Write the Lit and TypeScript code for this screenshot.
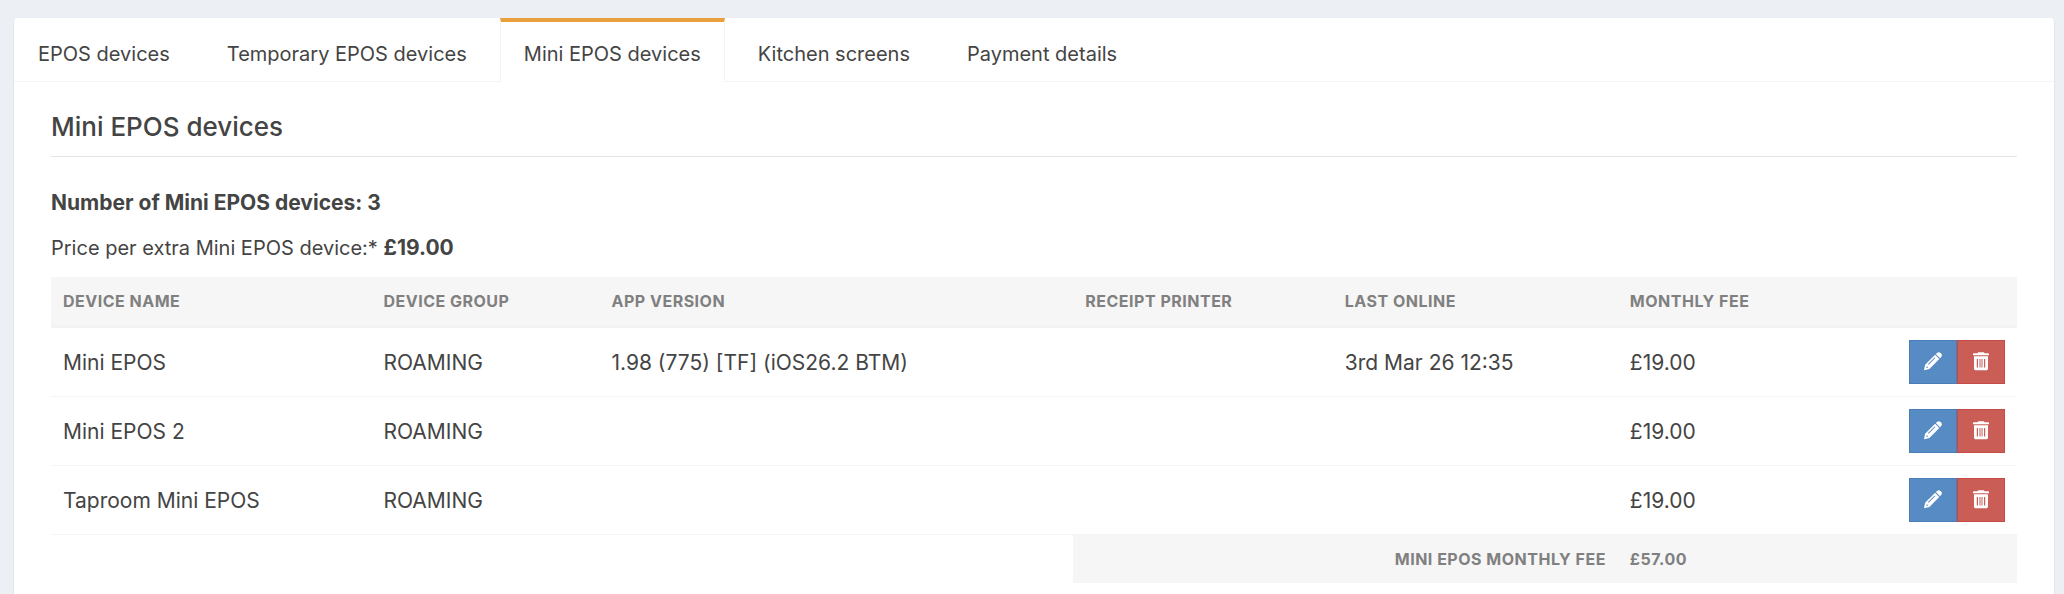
import { LitElement, html, css, svg } from "lit";
import { customElement, state } from "lit/decorators.js";

interface Device {
  name: string;
  group: string;
  version: string;
  printer: string;
  online: string;
  fee: string;
}

const TABS = [
  "EPOS devices",
  "Temporary EPOS devices",
  "Mini EPOS devices",
  "Kitchen screens",
  "Payment details",
];

const DEVICES: Device[] = [
  { name: "Mini EPOS", group: "ROAMING", version: "1.98 (775) [TF] (iOS26.2 BTM)", printer: "", online: "3rd Mar 26 12:35", fee: "£19.00" },
  { name: "Mini EPOS 2", group: "ROAMING", version: "", printer: "", online: "", fee: "£19.00" },
  { name: "Taproom Mini EPOS", group: "ROAMING", version: "", printer: "", online: "", fee: "£19.00" },
];

const pencil = svg`
  <path fill-rule="evenodd" d="M13.1.9a2.6 2.6 0 0 1 3.4 0l.7.7a2.6 2.6 0 0 1 0 3.5L16 6.3 11.8 2.1zM11.1 2.8l4.2 4.2L5.4 16.9 0 18.2l1.1-5.4zM10.7 5.4 4 12.1l.7.7L11.4 6.1zM2.9 14.1l-.6 1.9 1.9-.5z"/>`;

const trash = svg`
  <path fill-rule="evenodd" d="M5.6 1.2C5.7.5 6 .2 6.6.2h4.8c.6 0 .9.3 1 1h3.7c.6 0 .9.3.9.8v1.3H1V2c0-.5.3-.8.9-.8zM2 4.3h14v12c0 1.4-.6 2-2 2H4c-1.4 0-2-.6-2-2zM4.8 7v8.6H6V7zM7.5 7v8.6h1V7zM9.5 7v8.6h1V7zM12 7v8.6h1.2V7z"/>`;

@customElement("app-root")
export class AppRoot extends LitElement {
  @state() private active = 2;

  static styles = css`
    :host {
      display: block;
      box-sizing: border-box;
      min-height: 100vh;
      padding: 18px 10px 0 14px;
      background: #ecf0f5;
      color: #444;
      font: 400 20px/28px Inter, sans-serif;
    }
    * {
      box-sizing: border-box;
    }
    .card {
      min-height: calc(100vh - 18px);
      background: #fff;
      border-radius: 4px 4px 0 0;
      box-shadow: 0 1px 2px rgba(0, 0, 0, 0.12);
    }
    .tabs {
      display: flex;
      gap: 9px;
      border-bottom: 1px solid #f4f4f4;
    }
    .tab {
      margin: 0 0 -1px;
      padding: 18px 23px 14px;
      border: solid transparent;
      border-width: 4px 1px 0;
      background: none;
      color: inherit;
      font: inherit;
      white-space: nowrap;
      cursor: pointer;
    }
    .tab.active {
      border-color: #e99f3c #f4f4f4;
      background: #fff;
    }
    .panel {
      padding: 28px 37px 11px;
    }
    h2 {
      margin: 0 0 32px;
      padding-bottom: 12px;
      border-bottom: 1px solid #e5e5e5;
      font-size: 26px;
      line-height: 34px;
      font-weight: 500;
    }
    p {
      margin: 0 0 17px;
    }
    .price {
      margin-bottom: 15px;
    }
    strong {
      font-size: 21px;
      font-weight: 700;
    }
    table {
      width: 100%;
      table-layout: fixed;
      border-collapse: separate;
      border-spacing: 0;
    }
    .c-name { width: 16.3%; }
    .c-group { width: 11.6%; }
    .c-version { width: 24.1%; }
    .c-printer { width: 13.2%; }
    .c-online { width: 14.5%; }
    .c-fee { width: 14%; }
    th,
    td {
      padding: 12px;
      text-align: left;
      white-space: nowrap;
    }
    .head th,
    .foot td {
      background: #f6f6f6;
      color: #808080;
      font-size: 16px;
      line-height: 24px;
      font-weight: 700;
      letter-spacing: 0.5px;
      text-transform: uppercase;
    }
    .head th {
      border-bottom: 3px solid #f3f3f3;
    }
    .body td {
      padding-top: 14px;
      border-bottom: 1px solid #f4f4f4;
      font-size: 21px;
    }
    .body .tools {
      padding-top: 12px;
    }
    .foot .blank {
      background: none;
    }
    .foot .total,
    .body .tools {
      text-align: right;
    }
    .actions {
      display: inline-flex;
      vertical-align: top;
    }
    .btn {
      display: grid;
      place-items: center;
      width: 48px;
      height: 44px;
      padding: 0 0 2px;
      border: 1px solid;
      cursor: pointer;
    }
    .btn svg {
      width: 18px;
      height: 18px;
      overflow: visible;
      fill: #fff;
    }
    .edit {
      border-color: #4a7ebb;
      background: #568bc4;
    }
    .remove {
      border-color: #c64a45;
      background: #ca5d56;
    }
  `;

  render() {
    return html`
      <main class="card">
        <div class="tabs" role="tablist">
          ${TABS.map(
            (label, i) => html`<button
              class="tab ${i === this.active ? "active" : ""}"
              role="tab"
              aria-selected=${i === this.active}
              @click=${() => (this.active = i)}
            >${label}</button>`
          )}
        </div>
        <section class="panel">
          <h2>Mini EPOS devices</h2>
          <p><strong>Number of Mini EPOS devices: ${DEVICES.length}</strong></p>
          <p class="price">Price per extra Mini EPOS device:* <strong>£19.00</strong></p>
          <table>
            <colgroup>
              <col class="c-name" /><col class="c-group" /><col class="c-version" />
              <col class="c-printer" /><col class="c-online" /><col class="c-fee" /><col />
            </colgroup>
            <thead class="head">
              <tr>
                <th>Device name</th><th>Device group</th><th>App version</th>
                <th>Receipt printer</th><th>Last online</th><th>Monthly fee</th><th></th>
              </tr>
            </thead>
            <tbody class="body">
              ${DEVICES.map(
                (d) => html`<tr>
                  <td>${d.name}</td><td>${d.group}</td><td>${d.version}</td>
                  <td>${d.printer}</td><td>${d.online}</td><td>${d.fee}</td>
                  <td class="tools">
                    <div class="actions">
                      <button class="btn edit" aria-label="Edit ${d.name}"><svg viewBox="0 0 18 18" aria-hidden="true">${pencil}</svg></button>
                      <button class="btn remove" aria-label="Delete ${d.name}"><svg viewBox="0 0 18 18" aria-hidden="true">${trash}</svg></button>
                    </div>
                  </td>
                </tr>`
              )}
            </tbody>
            <tfoot class="foot">
              <tr>
                <td class="blank" colspan="3"></td>
                <td class="total" colspan="2">Mini EPOS monthly fee</td>
                <td colspan="2">£57.00</td>
              </tr>
            </tfoot>
          </table>
        </section>
      </main>
    `;
  }
}
